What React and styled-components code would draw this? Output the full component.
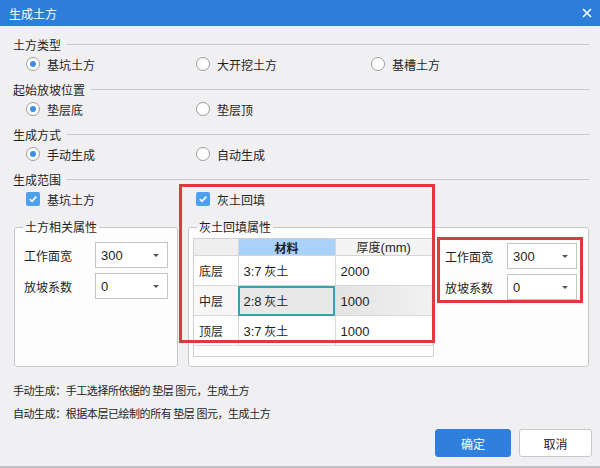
import React from "react";
import styled, { createGlobalStyle } from "styled-components";

const GlobalStyle = createGlobalStyle`
  body {
    margin: 0;
    font-family: "Noto Sans CJK SC", "Microsoft YaHei", "Noto Sans", sans-serif;
    font-size: 12px;
    color: #1f1f1f;
  }
`;

const Window = styled.div`
  position: relative;
  width: 600px;
  height: 468px;
  box-sizing: border-box;
  background: #f0f0f2;
  border-bottom: 2px solid #c2c2c4;
  display: flex;
  flex-direction: column;
`;

const TitleBar = styled.div`
  height: 26px;
  flex-shrink: 0;
  background: #2c7ed8;
  color: #fff;
  display: flex;
  align-items: center;
  justify-content: space-between;
  padding: 0 8px 0 9px;
  font-size: 12px;
`;

const Body = styled.div`
  flex: 1;
  display: flex;
  flex-direction: column;
  padding: 8px 10px 0 13px;
`;

const SectionHeader = styled.div`
  height: 20px;
  display: flex;
  align-items: center;
  gap: 6px;

  &::after {
    content: "";
    flex: 1;
    height: 1px;
    background: #c9c9cb;
  }
`;

const OptionRow = styled.div`
  height: 20px;
  display: grid;
  grid-template-columns: 170px 175px 1fr;
  align-items: center;
  padding-left: 13px;
  margin-bottom: 5px;
`;

const Option = styled.label`
  display: flex;
  align-items: center;
  gap: 7px;
`;

const RadioDot = styled.span`
  width: 14px;
  height: 14px;
  box-sizing: border-box;
  border-radius: 50%;
  border: 1px solid #9c9c9c;
  background: #fff;
  display: flex;
  align-items: center;
  justify-content: center;

  &::after {
    content: "";
    width: 6px;
    height: 6px;
    border-radius: 50%;
    background: ${(p) => (p.checked ? "#3b8fe8" : "transparent")};
  }
`;

const CheckMark = styled.span`
  width: 14px;
  height: 14px;
  border-radius: 2px;
  background: #4d9ff0;
  display: flex;
  align-items: center;
  justify-content: center;
`;

const GroupRow = styled.div`
  display: flex;
  gap: 10px;
  margin: 5px 0 0 1px;
`;

const GroupBox = styled.fieldset`
  width: ${(p) => p.w}px;
  height: 148px;
  box-sizing: border-box;
  margin: 0;
  padding: 0;
  border: 1px solid #c6c6c8;
  border-radius: 3px;
  background: #fdfdfd;
`;

const Legend = styled.legend`
  margin-left: 8px;
  padding: 0 2px;
  line-height: 16px;
  font-size: 12px;
`;

const GroupInner = styled.div`
  display: flex;
  flex-direction: ${(p) => (p.row ? "row" : "column")};
  gap: ${(p) => (p.row ? "11px" : "5px")};
  padding: ${(p) => p.pad};
`;

const PropList = styled.div`
  display: flex;
  flex-direction: column;
  gap: 5px;
  margin-top: ${(p) => p.top || 0}px;
`;

const PropRow = styled.div`
  display: flex;
  align-items: center;
  height: 26px;
`;

const PropLabel = styled.span`
  width: ${(p) => p.w}px;
`;

const Select = styled.div`
  width: ${(p) => p.w}px;
  height: 26px;
  box-sizing: border-box;
  border: 1px solid #c4c4c4;
  background: #fff;
  display: flex;
  align-items: center;
  justify-content: space-between;
  padding: 0 8px 0 5px;
  font-family: "Liberation Sans", "Noto Sans", sans-serif;
  font-size: 13px;

  &::after {
    content: "";
    border-left: 3px solid transparent;
    border-right: 3px solid transparent;
    border-top: 3px solid #555;
  }
`;

const TableWrap = styled.div`
  width: 241px;
  height: 119px;
  box-sizing: border-box;
  border: 1px solid #cfcfcf;
  background: #fff;
  flex-shrink: 0;
`;

const Grid = styled.table`
  border-collapse: collapse;
  table-layout: fixed;
  width: 239px;
`;

const Head = styled.th`
  height: 15px;
  padding: 0;
  font-size: 12px;
  line-height: 15px;
  font-weight: ${(p) => (p.bold ? 700 : 400)};
  background: ${(p) => p.bg};
  border-right: 1px solid #d6d6d6;
  border-bottom: 1px solid #d6d6d6;
`;

const Cell = styled.td`
  height: 29px;
  padding: 0 0 0 5px;
  font-size: 12px;
  border: 1px solid #dadada;
  border-left: none;
  background: ${(p) => p.bg || "#fff"};
  ${(p) => p.active && "outline: 2px solid #3a9fb0; outline-offset: -2px;"}
`;

const Num = styled.span`
  font-family: "Liberation Sans", "Noto Sans", sans-serif;
  font-size: 13px;
`;

const Notes = styled.div`
  margin-top: 13px;
  display: flex;
  flex-direction: column;
  gap: 3px;
  font-size: 11px;
  letter-spacing: -0.45px;
  line-height: 20px;
`;

const ButtonRow = styled.div`
  display: flex;
  justify-content: flex-end;
  gap: 8px;
  margin: 6px -2px 0 0;
`;

const Button = styled.button`
  width: ${(p) => p.w}px;
  height: 28px;
  border-radius: 3px;
  font-family: inherit;
  font-size: 12px;
  cursor: pointer;
  border: 1px solid ${(p) => (p.primary ? "#2f80dd" : "#c8c8c8")};
  background: ${(p) => (p.primary ? "#2f80dd" : "#fff")};
  color: ${(p) => (p.primary ? "#fff" : "#222")};
`;

const Marker = styled.div`
  position: absolute;
  left: ${(p) => p.x}px;
  top: ${(p) => p.y}px;
  width: ${(p) => p.w}px;
  height: ${(p) => p.h}px;
  box-sizing: border-box;
  border: 3px solid #dc3b3d;
  pointer-events: none;
`;

const Radio = ({ checked, children }) => (
  <Option>
    <RadioDot checked={checked} />
    {children}
  </Option>
);

const Check = ({ children }) => (
  <Option>
    <CheckMark>
      <svg width="10" height="10" viewBox="0 0 10 10">
        <path d="M1.8 5.2 L4 7.3 L8.3 2.6" fill="none" stroke="#fff" strokeWidth="1.6" />
      </svg>
    </CheckMark>
    {children}
  </Option>
);

const Props = ({ labelW, selW, top }) => (
  <PropList top={top}>
    <PropRow>
      <PropLabel w={labelW}>工作面宽</PropLabel>
      <Select w={selW}>300</Select>
    </PropRow>
    <PropRow>
      <PropLabel w={labelW}>放坡系数</PropLabel>
      <Select w={selW}>0</Select>
    </PropRow>
  </PropList>
);

const layers = [
  { name: "底层", mat: "3:7", h: "2000" },
  { name: "中层", mat: "2:8", h: "1000", active: true },
  { name: "顶层", mat: "3:7", h: "1000" },
];

export default function App() {
  return (
    <>
      <GlobalStyle />
      <Window>
        <TitleBar>
          <span>生成土方</span>
          <svg width="10" height="10" viewBox="0 0 10 10">
            <path d="M1 1 L9 9 M9 1 L1 9" stroke="#fff" strokeWidth="1.6" />
          </svg>
        </TitleBar>
        <Body>
          <SectionHeader>土方类型</SectionHeader>
          <OptionRow>
            <Radio checked>基坑土方</Radio>
            <Radio>大开挖土方</Radio>
            <Radio>基槽土方</Radio>
          </OptionRow>
          <SectionHeader>起始放坡位置</SectionHeader>
          <OptionRow>
            <Radio checked>垫层底</Radio>
            <Radio>垫层顶</Radio>
          </OptionRow>
          <SectionHeader>生成方式</SectionHeader>
          <OptionRow>
            <Radio checked>手动生成</Radio>
            <Radio>自动生成</Radio>
          </OptionRow>
          <SectionHeader>生成范围</SectionHeader>
          <OptionRow>
            <Check>基坑土方</Check>
            <Check>灰土回填</Check>
          </OptionRow>

          <GroupRow>
            <GroupBox w={164}>
              <Legend>土方相关属性</Legend>
              <GroupInner pad="7px 9px 0 9px">
                <Props labelW={71} selW={73} />
              </GroupInner>
            </GroupBox>
            <GroupBox w={401}>
              <Legend>灰土回填属性</Legend>
              <GroupInner row pad="3px 4px 0 4px">
                <TableWrap>
                  <Grid>
                    <colgroup>
                      <col style={{ width: 44 }} />
                      <col style={{ width: 97 }} />
                      <col />
                    </colgroup>
                    <thead>
                      <tr>
                        <Head bg="#efefef" />
                        <Head bg="#a9d1f9" bold>材料</Head>
                        <Head bg="#f4f4f4">
                          厚度<Num>(mm)</Num>
                        </Head>
                      </tr>
                    </thead>
                    <tbody>
                      {layers.map((l) => (
                        <tr key={l.name}>
                          <Cell bg={l.active ? "#f7f7f7" : undefined}>{l.name}</Cell>
                          <Cell active={l.active} bg={l.active ? "#e8e8e8" : undefined}>
                            <Num>{l.mat}</Num> 灰土
                          </Cell>
                          <Cell bg={l.active ? "linear-gradient(90deg, #e3e3e3, #f1f1f1)" : undefined}>
                            <Num>{l.h}</Num>
                          </Cell>
                        </tr>
                      ))}
                    </tbody>
                  </Grid>
                </TableWrap>
                <Props labelW={62} selW={70} top={5} />
              </GroupInner>
            </GroupBox>
          </GroupRow>

          <Notes>
            <span>手动生成：手工选择所依据的 垫层 图元，生成土方</span>
            <span>自动生成：根据本层已绘制的所有 垫层 图元，生成土方</span>
          </Notes>

          <ButtonRow>
            <Button primary w={76}>确定</Button>
            <Button w={73}>取消</Button>
          </ButtonRow>
        </Body>

        <Marker x={179} y={184} w={256} h={159} />
        <Marker x={437} y={237} w={146} h={66} />
      </Window>
    </>
  );
}
